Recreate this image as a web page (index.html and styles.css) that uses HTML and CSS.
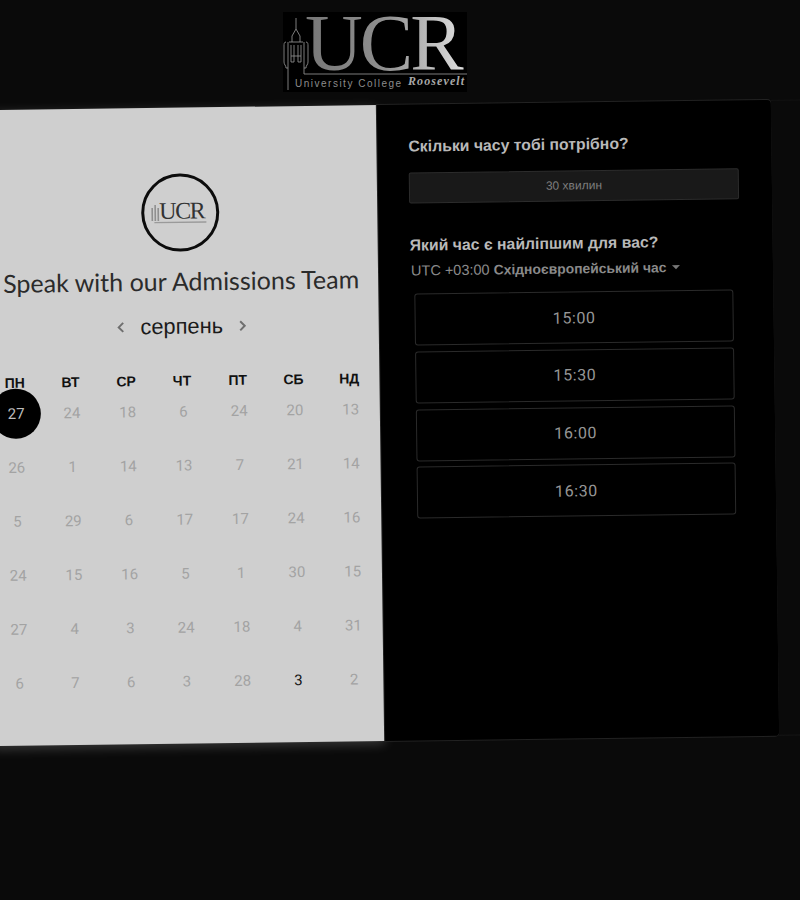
FILE: index.html
```html
<!DOCTYPE html>
<html lang="uk">
<head>
<meta charset="utf-8">
<title>UCR</title>
<link rel="stylesheet" href="styles.css">
</head>
<body>
<header class="top">
  <svg class="logo" viewBox="0 0 184 80" width="184" height="80">
    <defs>
      <linearGradient id="metal" x1="0" x2="1" y1="0" y2="0">
        <stop offset="0" stop-color="#777"/>
        <stop offset="0.5" stop-color="#8f8f8f"/>
        <stop offset="1" stop-color="#e0e0e0"/>
      </linearGradient>
    </defs>
    <rect width="184" height="80" fill="#000"/>
    <g fill="none" stroke="#8a8a8a" stroke-width="0.9">
      <path d="M13 6V17M9 24 13 17 17 24M9 24V30M17 24V30M6 30H20"/>
      <path d="M3 30C1 30 1 32 1 34V50C1 53 3 53 3 56M5 30V56H3M21 30V56H23M23 30C25 30 25 32 25 34V50C25 53 23 53 23 56"/>
      <path d="M8 33V50H11V33M15 33V50H18V33M8 44H18"/>
      <path d="M5 56V78M21 56V62H184"/>
    </g>
    <text class="logo-ucr" x="22" y="58" fill="url(#metal)">UCR</text>
    <text class="logo-uni" x="12" y="74.5">University College</text>
    <text class="logo-roo" x="125" y="73">Roosevelt</text>
  </svg>
</header>

<main class="stage">
  <section class="left">
    <div class="badge">
      <svg class="badge-logo" viewBox="0 0 60 26" width="60" height="26">
        <g fill="none" stroke="#8f8f8f" stroke-width="1.6">
          <path d="M2 8V21M5 5V21M8 8V21"/>
        </g>
        <text class="badge-ucr" x="9" y="19">UCR</text>
        <rect x="4" y="22" width="52" height="1.4" fill="#9a9a9a"/>
      </svg>
    </div>
    <h1 class="title">Speak with our Admissions Team</h1>
    <div class="month">
      <svg class="chev" viewBox="0 0 8 12" width="8" height="12"><path d="M6.5 1.5 2 6l4.5 4.5"/></svg>
      <span class="month-name">серпень</span>
      <svg class="chev" viewBox="0 0 8 12" width="8" height="12"><path d="M1.5 1.5 6 6l-4.5 4.5"/></svg>
    </div>
    <div class="cal">
      <div class="dow">ПН</div><div class="dow">ВТ</div><div class="dow">СР</div><div class="dow">ЧТ</div><div class="dow">ПТ</div><div class="dow">СБ</div><div class="dow">НД</div>
      <div class="day"><span class="sel">27</span></div><div class="day"><span>24</span></div><div class="day"><span>18</span></div><div class="day"><span>6</span></div><div class="day"><span>24</span></div><div class="day"><span>20</span></div><div class="day"><span>13</span></div>
      <div class="day"><span>26</span></div><div class="day"><span>1</span></div><div class="day"><span>14</span></div><div class="day"><span>13</span></div><div class="day"><span>7</span></div><div class="day"><span>21</span></div><div class="day"><span>14</span></div>
      <div class="day"><span>5</span></div><div class="day"><span>29</span></div><div class="day"><span>6</span></div><div class="day"><span>17</span></div><div class="day"><span>17</span></div><div class="day"><span>24</span></div><div class="day"><span>16</span></div>
      <div class="day"><span>24</span></div><div class="day"><span>15</span></div><div class="day"><span>16</span></div><div class="day"><span>5</span></div><div class="day"><span>1</span></div><div class="day"><span>30</span></div><div class="day"><span>15</span></div>
      <div class="day"><span>27</span></div><div class="day"><span>4</span></div><div class="day"><span>3</span></div><div class="day"><span>24</span></div><div class="day"><span>18</span></div><div class="day"><span>4</span></div><div class="day"><span>31</span></div>
      <div class="day"><span>6</span></div><div class="day"><span>7</span></div><div class="day"><span>6</span></div><div class="day"><span>3</span></div><div class="day"><span>28</span></div><div class="day"><span class="today">3</span></div><div class="day"><span>2</span></div>
    </div>
  </section>

  <section class="right">
    <h2 class="q">Скільки часу тобі потрібно?</h2>
    <div class="dur">30 хвилин</div>
    <h2 class="q q-second">Який час є найліпшим для вас?</h2>
    <div class="tz">
      <span class="tz-utc">UTC +03:00</span>
      <span class="tz-name">Східноєвропейський час</span>
      <span class="caret"></span>
    </div>
    <div class="slots">
      <div class="slot">15:00</div>
      <div class="slot">15:30</div>
      <div class="slot">16:00</div>
      <div class="slot">16:30</div>
    </div>
  </section>

  <div class="strip"></div>
</main>
</body>
</html>
```

FILE: styles.css
```css
html, body {
  margin: 0;
  height: 900px;
  overflow: hidden;
  background: #0a0a0a;
  font-family: "Liberation Sans", Arial, sans-serif;
}

.top {
  height: 105px;
  display: flex;
  justify-content: center;
  box-sizing: border-box;
  padding-top: 12px;
}

.logo {
  display: block;
  margin-right: 50px;
  overflow: visible;
}

.badge-logo {
  overflow: visible;
}

.logo-ucr {
  font-family: "Liberation Serif", serif;
  font-size: 80px;
  letter-spacing: -3px;
}

.logo-uni {
  font-family: "Liberation Sans", sans-serif;
  font-size: 10px;
  letter-spacing: 1.5px;
  fill: #8c8c8c;
}

.logo-roo {
  font-family: "Liberation Serif", serif;
  font-style: italic;
  font-weight: 700;
  font-size: 12px;
  letter-spacing: 1.1px;
  fill: #a8a8a8;
}

.stage {
  display: flex;
  width: 830px;
  height: 636px;
  margin-left: -13px;
  transform: rotate(-0.75deg);
  transform-origin: 394px 318px;
}

.left {
  flex: 0 0 394px;
  box-sizing: border-box;
  background: #cfcfcf;
  padding: 66px 2px 0 0;
  display: flex;
  flex-direction: column;
  align-items: center;
  box-shadow: 0 3px 12px rgba(255, 255, 255, 0.2);
}

.badge {
  width: 78px;
  height: 78px;
  box-sizing: border-box;
  border: 3px solid #0c0c0c;
  border-radius: 50%;
  display: flex;
  align-items: center;
  justify-content: center;
}

.badge-ucr {
  font-family: "Liberation Serif", serif;
  font-size: 24px;
  letter-spacing: -1.5px;
  fill: #333;
}

.title {
  margin: 13px 0 0;
  font-family: Lato, sans-serif;
  font-size: 25px;
  line-height: 32px;
  font-weight: 400;
  color: #2b2b2b;
  white-space: nowrap;
}

.month {
  margin-top: 15px;
  height: 30px;
  display: flex;
  align-items: center;
  gap: 16px;
}

.month-name {
  font-size: 21.8px;
  color: #1a1a1a;
}

.chev {
  fill: none;
  stroke: #6f6f6f;
  stroke-width: 2;
}

.cal {
  margin: 34px 0 0 1px;
  display: grid;
  grid-template-columns: repeat(7, 55.75px);
  grid-template-rows: 11px repeat(6, 54px);
}

.dow {
  padding-right: 2px;
  font-size: 14px;
  font-weight: 700;
  line-height: 10px;
  text-align: center;
  color: #111;
}

.day {
  display: flex;
  justify-content: center;
  align-items: flex-start;
  font-family: Roboto, sans-serif;
  font-size: 15px;
  color: #a3a3a3;
}

.day span {
  height: 50px;
  line-height: 50px;
}

.day .sel {
  width: 50px;
  border-radius: 50%;
  background: #000;
  color: #bdbdbd;
  text-align: center;
}

.day .today {
  color: #141414;
}

.right {
  flex: 0 0 394px;
  box-sizing: border-box;
  background: #000;
  padding: 32px 31px 0;
  border-radius: 0 4px 4px 0;
  box-shadow: 0 0 0 1px #222;
}

.q {
  margin: 0;
  font-size: 15.8px;
  line-height: 20px;
  font-weight: 700;
  color: #b9b9b9;
}

.dur {
  margin: 16px 2px 0 0;
  height: 31px;
  box-sizing: border-box;
  background: #191919;
  border: 1px solid #2c2c2c;
  border-radius: 2px;
  font-size: 12px;
  line-height: 29px;
  text-align: center;
  color: #7e7e7e;
}

.q-second {
  margin-top: 32px;
}

.tz {
  margin: 5px 0 0 1px;
  height: 20px;
  display: flex;
  align-items: center;
  gap: 4px;
  font-size: 14.5px;
  color: #8a8a8a;
}

.tz-name {
  font-size: 13.9px;
  font-weight: 700;
}

.caret {
  margin-left: 2px;
  border: 4px solid transparent;
  border-top-color: #777;
  border-bottom: 0;
}

.slots {
  margin: 13px 0 0 4px;
  display: flex;
  flex-direction: column;
  gap: 5.8px;
}

.slot {
  height: 52px;
  width: 319px;
  box-sizing: border-box;
  border: 1px solid #2a2a2a;
  border-radius: 3px;
  display: flex;
  align-items: center;
  justify-content: center;
  font-family: Roboto, sans-serif;
  font-size: 16px;
  letter-spacing: 0.6px;
  color: #969696;
}

.strip {
  flex: 0 0 42px;
  border-top: 1px solid #131313;
  border-bottom: 1px solid #161616;
  background: #0a0a0a;
}
```
